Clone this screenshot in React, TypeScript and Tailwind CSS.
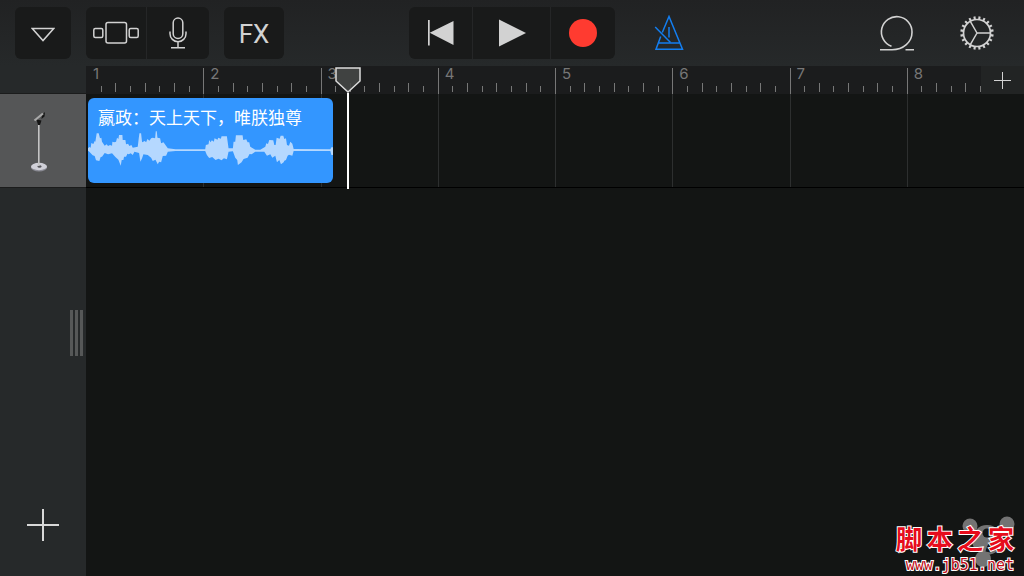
import type { ReactNode } from "react";

const BARS = [1, 2, 3, 4, 5, 6, 7, 8];
const TICKS = [0, 1, 2, 3, 4, 5, 6, 7];

// positions in bars, measured from the start of the song
const PLAYHEAD = 2.235;
const REGION_LENGTH = 2.11;

const percent = (bars: number) => `${(bars / BARS.length) * 100}%`;

interface ToolButtonProps {
  label: string;
  className?: string;
  children: ReactNode;
}

function ToolButton({ label, className = "", children }: ToolButtonProps) {
  return (
    <button
      type="button"
      aria-label={label}
      className={`flex h-full items-center justify-center text-[#d2d2d2] ${className}`}
    >
      {children}
    </button>
  );
}

function BrowserIcon() {
  return (
    <svg width="46" height="24" viewBox="0 0 46 24" fill="none" stroke="currentColor" strokeWidth="1.5">
      <rect x="0.8" y="7.5" width="9" height="9" rx="1.5" />
      <rect x="13" y="1.5" width="20.5" height="20.5" rx="2" />
      <rect x="36.2" y="7.5" width="9" height="9" rx="1.5" />
    </svg>
  );
}

function MicIcon() {
  return (
    <svg width="20" height="32" viewBox="0 0 20 32" fill="none" stroke="currentColor" strokeWidth="1.5">
      <rect x="5.2" y="1" width="9.6" height="20.5" rx="4.8" />
      <path d="M2 14.5v2.2a8 8 0 0 0 16 0v-2.2M10 24.7v6M3 30.8h14" />
    </svg>
  );
}

function MetronomeIcon() {
  return (
    <svg width="30" height="36" viewBox="0 0 30 36" fill="none" stroke="currentColor" strokeWidth="1.5">
      <path d="M8.300 17.500L15 1.500 28.500 34.300H2L6.700 21.500M4.500 28h21.300M15 12v10.500" />
      <path d="M1.200 12L16.500 27.500" />
    </svg>
  );
}

function LoopIcon() {
  return (
    <svg width="36" height="37" viewBox="0 0 36 37" fill="none" stroke="currentColor" strokeWidth="1.6">
      <path d="M1 34.700h12C24.500 34.700 33 27 33 17.200A15.300 15.300 0 1 0 12.500 31.300M26.500 34.700h8.500" />
    </svg>
  );
}

function GearIcon() {
  const teeth = Array.from({ length: 20 }, (_, i) => i * 18 + 9);
  return (
    <svg width="36" height="36" viewBox="0 0 36 36" fill="none" stroke="currentColor">
      <circle cx="18" cy="18" r="13.5" strokeWidth="1.7" />
      {teeth.map((angle) => (
        <path key={angle} d="M18 4.500V1.300" strokeWidth="2.100" transform={`rotate(${angle} 18 18)`} />
      ))}
      <path d="M18 18h13.500M18 18l-6.700-11.700M18 18l-6.700 11.700" strokeWidth="1.500" />
    </svg>
  );
}

function MicStand() {
  return (
    <svg width="20" height="62" viewBox="0 0 20 62" fill="none">
      <ellipse cx="10" cy="56.500" rx="8" ry="4" fill="#8b8b94" />
      <ellipse cx="10" cy="55.500" rx="8" ry="3.700" fill="#d0d0d8" />
      <ellipse cx="10.500" cy="55.500" rx="2" ry="1.300" fill="#55555a" />
      <path d="M9.800 55V12" stroke="#c4c4c4" strokeWidth="1.600" />
      <path d="M7.500 8.500l5 1-1.500 4.500H9z" fill="#151515" />
      <path d="M13 4l3-3-.5 4.500-3 2.500z" fill="#151515" />
      <path d="M5.500 9.500l8.500-7" stroke="#a9a9a9" strokeWidth="2.200" />
    </svg>
  );
}

function Plus({ size, strokeWidth }: { size: number; strokeWidth: number }) {
  return (
    <svg
      width={size}
      height={size}
      viewBox={`0 0 ${size} ${size}`}
      stroke="currentColor"
      strokeWidth={strokeWidth}
    >
      <path d={`M${size / 2} 0v${size}M0 ${size / 2}h${size}`} />
    </svg>
  );
}

function Toolbar() {
  return (
    <header className="grid h-[66px] shrink-0 grid-cols-[1fr_auto_1fr] items-center bg-linear-to-b from-[#212223] to-[#26292a]">
      <div className="flex h-[52px] gap-[15px] pl-[15px]">
        <ToolButton label="My Songs" className="w-14 rounded-md bg-[#191a1a]">
          <svg width="24" height="16" viewBox="0 0 24 16" fill="none" stroke="currentColor" strokeWidth="1.5" className="mt-1">
            <path d="M1.300 1.500h21.400L12 13.500z" />
          </svg>
        </ToolButton>
        <div className="flex divide-x divide-[#252627] rounded-md bg-[#191a1a]">
          <ToolButton label="Browser" className="w-[61px]">
            <BrowserIcon />
          </ToolButton>
          <ToolButton label="Instrument" className="w-[62px]">
            <MicIcon />
          </ToolButton>
        </div>
        <ToolButton label="Effects" className="w-[60px] rounded-md bg-[#191a1a]">
          <span className="pt-[2px] font-['Roboto','Inter',sans-serif] text-[26px] leading-8">FX</span>
        </ToolButton>
      </div>

      <div className="flex h-[52px] divide-x divide-[#252627] rounded-md bg-[#191a1a]">
        <ToolButton label="Rewind" className="w-16">
          <svg width="26" height="26" viewBox="0 0 26 26" fill="currentColor">
            <path d="M0 0h1.700v25.500H0zM1.700 12.700L25.500 1v24z" />
          </svg>
        </ToolButton>
        <ToolButton label="Play" className="w-[78px]">
          <svg width="28" height="28" viewBox="0 0 28 28" fill="currentColor">
            <path d="M1 .5L28 14 1 27.500z" />
          </svg>
        </ToolButton>
        <ToolButton label="Record" className="w-16">
          <span className="size-7 rounded-full bg-[#ff3b30]" />
        </ToolButton>
      </div>

      <div className="flex h-[52px] items-center justify-between pr-[29px] pl-[39px]">
        <button type="button" aria-label="Metronome" className="text-[#137ef0]">
          <MetronomeIcon />
        </button>
        <div className="flex items-center gap-11 text-[#d2d2d2]">
          <button type="button" aria-label="Loop Browser">
            <LoopIcon />
          </button>
          <button type="button" aria-label="Settings">
            <GearIcon />
          </button>
        </div>
      </div>
    </header>
  );
}

function Sidebar() {
  return (
    <aside className="flex w-[86px] shrink-0 flex-col bg-[#26292a]">
      <div className="h-7 border-b border-[#1b1c1c]" />
      <button
        type="button"
        aria-label="Audio Recorder track"
        className="flex h-[94px] items-center justify-center border-b border-[#1b1c1c] bg-[#555657] pt-[3px] pr-2"
      >
        <MicStand />
      </button>
      <div className="mt-[122px] flex h-[46px] justify-end gap-[2px] pr-[3px]">
        <span className="w-[3px] bg-[#565858]" />
        <span className="w-[3px] bg-[#565858]" />
        <span className="w-[3px] bg-[#565858]" />
      </div>
      <button type="button" aria-label="Add track" className="mx-auto mt-auto mb-[35px] text-[#d8d8d8]">
        <Plus size={32} strokeWidth={2} />
      </button>
    </aside>
  );
}

function Ruler() {
  return (
    <div className="relative h-7 bg-[#1b1c1d]">
      <div className="grid h-full grid-cols-8">
        {BARS.map((bar) => (
          <div key={bar} className="relative flex items-end pb-[2px]">
            {bar > 1 && <span className="absolute top-[2px] bottom-0 left-0 w-px bg-[#777]" />}
            <span className="absolute top-0 left-[7px] text-[15px] leading-4 text-[#777]">{bar}</span>
            <div className="grid flex-1 grid-cols-8 items-end">
              {TICKS.map((tick) => (
                <span
                  key={tick}
                  className={
                    tick === 0 ? "h-0" : tick % 2 ? "h-[6px] w-px bg-[#777]" : "h-[9px] w-px bg-[#777]"
                  }
                />
              ))}
            </div>
          </div>
        ))}
      </div>
      <button
        type="button"
        aria-label="Add section"
        className="absolute inset-y-0 right-0 flex w-[43px] items-center justify-center bg-[#222424] text-[#d2d2d2]"
      >
        <Plus size={17} strokeWidth={1} />
      </button>
    </div>
  );
}

function Waveform() {
  return (
    <svg viewBox="0 15 735 108" preserveAspectRatio="none" className="block h-9 w-full fill-[#b5d8ff]">
      <path d="M0 70L4 66 8 68 10 54 16 57 20 48 22 50 26 25 32 25 36 40 40 38 42 50 50 62 56 58 60 63 66 60 72 62 73 50 78 52 84 50 87 38 91 42 93 30 103 30 104 45 112 45 114 58 120 56 124 63 130 60 134 68 149 65 152 40 154 25 159 25 162 52 170 48 174 52 178 42 184 47 189 40 194 38 201 40 203 19 206 19 208 38 216 40 219 55 226 52 232 60 239 70 262 73 351 73 353 60 361 58 363 45 367 52 371 46 377 50 379 40 388 44 390 38 398 41 400 34 416 34 421 70 434 70 436 50 441 50 443 31 463 31 465 45 474 43 478 52 483 52 486 65 501 74 516 74 531 65 534 55 539 57 543 45 555 46 558 60 562 60 565 38 574 41 577 32 585 32 588 42 593 40 596 60 602 62 606 50 612 56 616 72 726 73 729 67 735 67 735 90 729 90 726 78 616 78 612 92 602 89 598 92 593 105 588 107 586 112 578 118 573 105 566 112 561 92 552 98 546 88 536 92 528 80 501 80 490 88 484 87 478 98 466 102 460 112 449 120 447 105 441 98 434 79 421 80 416 103 407 100 400 106 391 101 382 105 372 96 363 99 356 90 351 78 262 78 239 80 234 92 224 93 219 112 213 110 209 118 202 104 194 108 189 98 179 90 166 88 162 100 157 110 153 84 139 80 134 90 128 85 122 88 118 86 114 95 108 95 106 105 101 105 98 122 91 104 82 96 72 85 60 88 50 84 42 95 38 96 34 108 24 106 20 93 14 91 4 80 0 77Z" />
    </svg>
  );
}

function Track() {
  return (
    <div className="relative h-[94px] border-b border-black bg-[#131514]">
      <div className="grid h-full grid-cols-8">
        {BARS.map((bar) => (
          <span key={bar} className={bar > 1 ? "border-l border-[#2d2f2f]" : ""} />
        ))}
      </div>
      <div className="absolute inset-y-1 left-0 pl-[2px]" style={{ width: percent(REGION_LENGTH) }}>
        <div className="h-[85px] overflow-hidden rounded-md bg-[#3396ff] pt-2">
          <p className="pl-[10px] text-[17px] leading-6 whitespace-nowrap text-white">嬴政：天上天下，唯朕独尊</p>
          <Waveform />
        </div>
      </div>
    </div>
  );
}

function Playhead() {
  return (
    <div
      className="pointer-events-none absolute top-px flex h-[122px] w-[26px] -translate-x-1/2 flex-col items-center"
      style={{ left: percent(PLAYHEAD) }}
    >
      <svg width="26" height="26" viewBox="0 0 26 26" className="shrink-0">
        <path d="M1 1h24v13L13 25 1 14z" fill="#454746" fillOpacity="0.9" stroke="#dcdcdc" strokeWidth="1.500" />
      </svg>
      <span className="w-[2px] flex-1 bg-white" />
    </div>
  );
}

function Watermark() {
  return (
    <div className="absolute right-[10px] bottom-[2px] w-[118px]">
      <svg
        width="56"
        height="52"
        viewBox="0 0 56 52"
        className="absolute right-0 bottom-1 overflow-visible"
        fill="#737373"
      >
        <circle cx="12" cy="8" r="7.500" />
        <circle cx="49" cy="6" r="7.500" />
        <circle cx="29" cy="22" r="15" />
        <circle cx="25" cy="41" r="8" />
        <circle cx="29" cy="15" r="4.500" fill="#131514" />
        <path d="M30 34q2-11 12-10" stroke="#131514" strokeWidth="5" fill="none" />
      </svg>
      <div className="relative text-[#e60c1c] [-webkit-text-stroke:2px_white] [paint-order:stroke]">
        <p className="flex justify-between font-['Liberation_Serif','Noto_Sans_CJK_SC',serif] text-[26px] leading-[30px] font-bold">
          <span>脚</span>
          <span>本</span>
          <span>之</span>
          <span>家</span>
        </p>
        <p className="text-right font-['DejaVu_Sans_Mono',monospace] text-[15px] leading-[18px] text-[#c00c18]">
          www.jb51.net
        </p>
      </div>
    </div>
  );
}

export default function App() {
  return (
    <div className="relative flex min-h-screen flex-col overflow-hidden bg-[#131514] font-['Inter','Noto_Sans_CJK_SC',sans-serif]">
      <Toolbar />
      <div className="flex flex-1">
        <Sidebar />
        <main className="relative min-w-0 flex-1">
          <Ruler />
          <Track />
          <Playhead />
        </main>
      </div>
      <Watermark />
    </div>
  );
}
